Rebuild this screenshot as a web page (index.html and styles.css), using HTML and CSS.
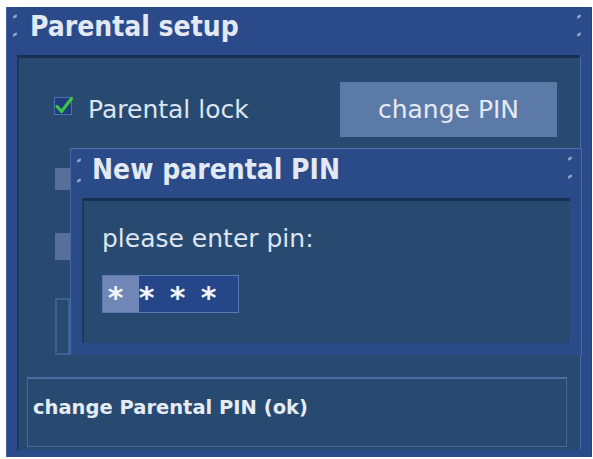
FILE: index.html
```html
<!DOCTYPE html>
<html>
<head>
<meta charset="utf-8">
<link rel="stylesheet" href="styles.css">
</head>
<body>
<div class="screen">
  <div class="titlebar">
    <div class="grip"><span></span><span></span></div>
    <div class="title">Parental setup</div>
    <div class="grip grip-right"><span></span><span></span></div>
  </div>
  <div class="main">
    <div class="content">
      <div class="row">
        <svg class="check" width="20" height="20" viewBox="0 0 20 20">
          <rect x="0.5" y="1.5" width="17" height="17" fill="#1f3b7c" stroke="#4f70ae"/>
          <path d="M3 10.5 L7.5 15.5 L17.5 2.5" fill="none" stroke="#3cc447" stroke-width="3.2" stroke-linejoin="round" stroke-linecap="round"/>
        </svg>
        <span class="label">Parental lock</span>
        <div class="button">change PIN</div>
      </div>
      <div class="ghost ghost1"></div>
      <div class="ghost ghost2"></div>
      <div class="ghost ghost3"></div>
    </div>
    <div class="status">change Parental PIN (ok)</div>
  </div>

  <div class="dialog">
    <div class="dtitlebar">
      <div class="grip dgrip"><span></span><span></span></div>
      <div class="dtitle">New parental PIN</div>
      <div class="grip dgrip-right"><span></span><span></span></div>
    </div>
    <div class="dbody">
      <div class="dinner">
        <div class="prompt">please enter pin:</div>
        <div class="pin"><span>*</span><span>*</span><span>*</span><span>*</span></div>
      </div>
    </div>
  </div>
</div>
</body>
</html>
```

FILE: styles.css
```css
html, body {
  margin: 0;
  padding: 0;
  background: #ffffff;
}

body {
  font-family: "DejaVu Sans", "Noto Sans", sans-serif;
  color: #dfe7f2;
}

.screen {
  position: relative;
  margin: 7px 0 0 6px;
  width: 586px;
  height: 450px;
  background: #2b4a8a;
  box-shadow: inset 1px 0 0 #3c5c9c, inset -1px 0 0 #22407a;
  display: flex;
  flex-direction: column;
}

.titlebar {
  height: 48px;
  display: flex;
  align-items: flex-start;
  padding-left: 7px;
  box-sizing: border-box;
}

.grip {
  display: flex;
  flex-direction: column;
  gap: 15px;
  padding-top: 8px;
  width: 5px;
}

.grip span {
  display: block;
  width: 4px;
  height: 3px;
  background: #8ea2c6;
  border-radius: 1px;
  transform: skewY(-25deg);
}

.title {
  font-family: "DejaVu Sans Condensed", "DejaVu Sans", sans-serif;
  font-weight: bold;
  font-size: 28px;
  line-height: 40px;
  margin-left: 12px;
  color: #e2e9f4;
  flex: 1;
}

.grip-right {
  margin-right: 10px;
}

.main {
  margin: 0 12px 7px 11px;
  height: 395px;
  box-sizing: border-box;
  background: #284a70;
  border-top: 3px solid #17304f;
  border-left: 2px solid #1d3860;
  box-shadow: 1px 0 0 #4a69a4;
  display: flex;
  flex-direction: column;
}

.content {
  height: 309px;
  display: flex;
  flex-direction: column;
}

.row {
  display: flex;
  align-items: center;
  padding-top: 24px;
  padding-left: 35px;
  padding-right: 23px;
}

.check {
  margin-bottom: 8px;
  flex: none;
}

.label {
  font-size: 25px;
  line-height: 30px;
  margin-left: 14px;
  color: #dde5f0;
}

.button {
  margin-left: auto;
  width: 217px;
  height: 55px;
  background: #5c7aa7;
  font-size: 25px;
  line-height: 55px;
  text-align: center;
  color: #e4eaf4;
}

.ghost {
  margin-left: 36px;
  width: 15px;
  background: #56709a;
}

.ghost1 {
  margin-top: 31px;
  height: 22px;
}

.ghost2 {
  margin-top: 43px;
  height: 27px;
}

.ghost3 {
  margin-top: 38px;
  height: 57px;
  background: transparent;
  box-sizing: border-box;
  border: 2px solid #3f6093;
}

.status {
  margin: 10px 13px 0 8px;
  height: 70px;
  box-sizing: border-box;
  border: 1px solid #46679c;
  border-top: 2px solid #4a6ca2;
  background: #284a70;
  padding: 17px 0 0 5px;
  font-weight: bold;
  font-size: 19.5px;
  line-height: 24px;
  color: #e6ecf5;
}

/* overlay dialog */
.dialog {
  position: absolute;
  left: 64px;
  top: 141px;
  width: 512px;
  height: 207px;
  background: #2b4a88;
  border-top: 1px solid #5170aa;
  box-sizing: border-box;
  box-shadow: inset 1px 0 0 #4a69a4, inset -1px 0 0 #4a69a4;
  display: flex;
  flex-direction: column;
}

.dtitlebar {
  height: 49px;
  display: flex;
  align-items: flex-start;
  padding-left: 7px;
  box-sizing: border-box;
}

.dgrip {
  padding-top: 10px;
  gap: 17px;
}

.dtitle {
  font-family: "DejaVu Sans Condensed", "DejaVu Sans", sans-serif;
  font-weight: bold;
  font-size: 28px;
  line-height: 42px;
  margin-left: 10px;
  color: #e2e9f4;
  flex: 1;
}

.dgrip-right {
  margin-right: 9px;
}

.dbody {
  flex: 1;
  padding: 0 12px 12px 12px;
  display: flex;
}

.dinner {
  flex: 1;
  background: #284a70;
  border-top: 3px solid #17304f;
  border-left: 2px solid #1d3860;
  padding: 23px 0 0 18px;
}

.prompt {
  font-size: 25px;
  line-height: 30px;
  color: #dde5f0;
}

.pin {
  margin-top: 21px;
  width: 137px;
  height: 38px;
  box-sizing: border-box;
  border: 1px solid #5b7ab2;
  background: linear-gradient(to right, #6f86b6 0 36px, #25478a 36px);
  display: flex;
  align-items: flex-start;
}

.pin span {
  display: block;
  width: 31px;
  text-align: center;
  font-weight: bold;
  font-size: 30px;
  line-height: 28px;
  padding-top: 8px;
  color: #f2f5fb;
}

.pin span:first-child {
  margin-left: -3px;
}
```
